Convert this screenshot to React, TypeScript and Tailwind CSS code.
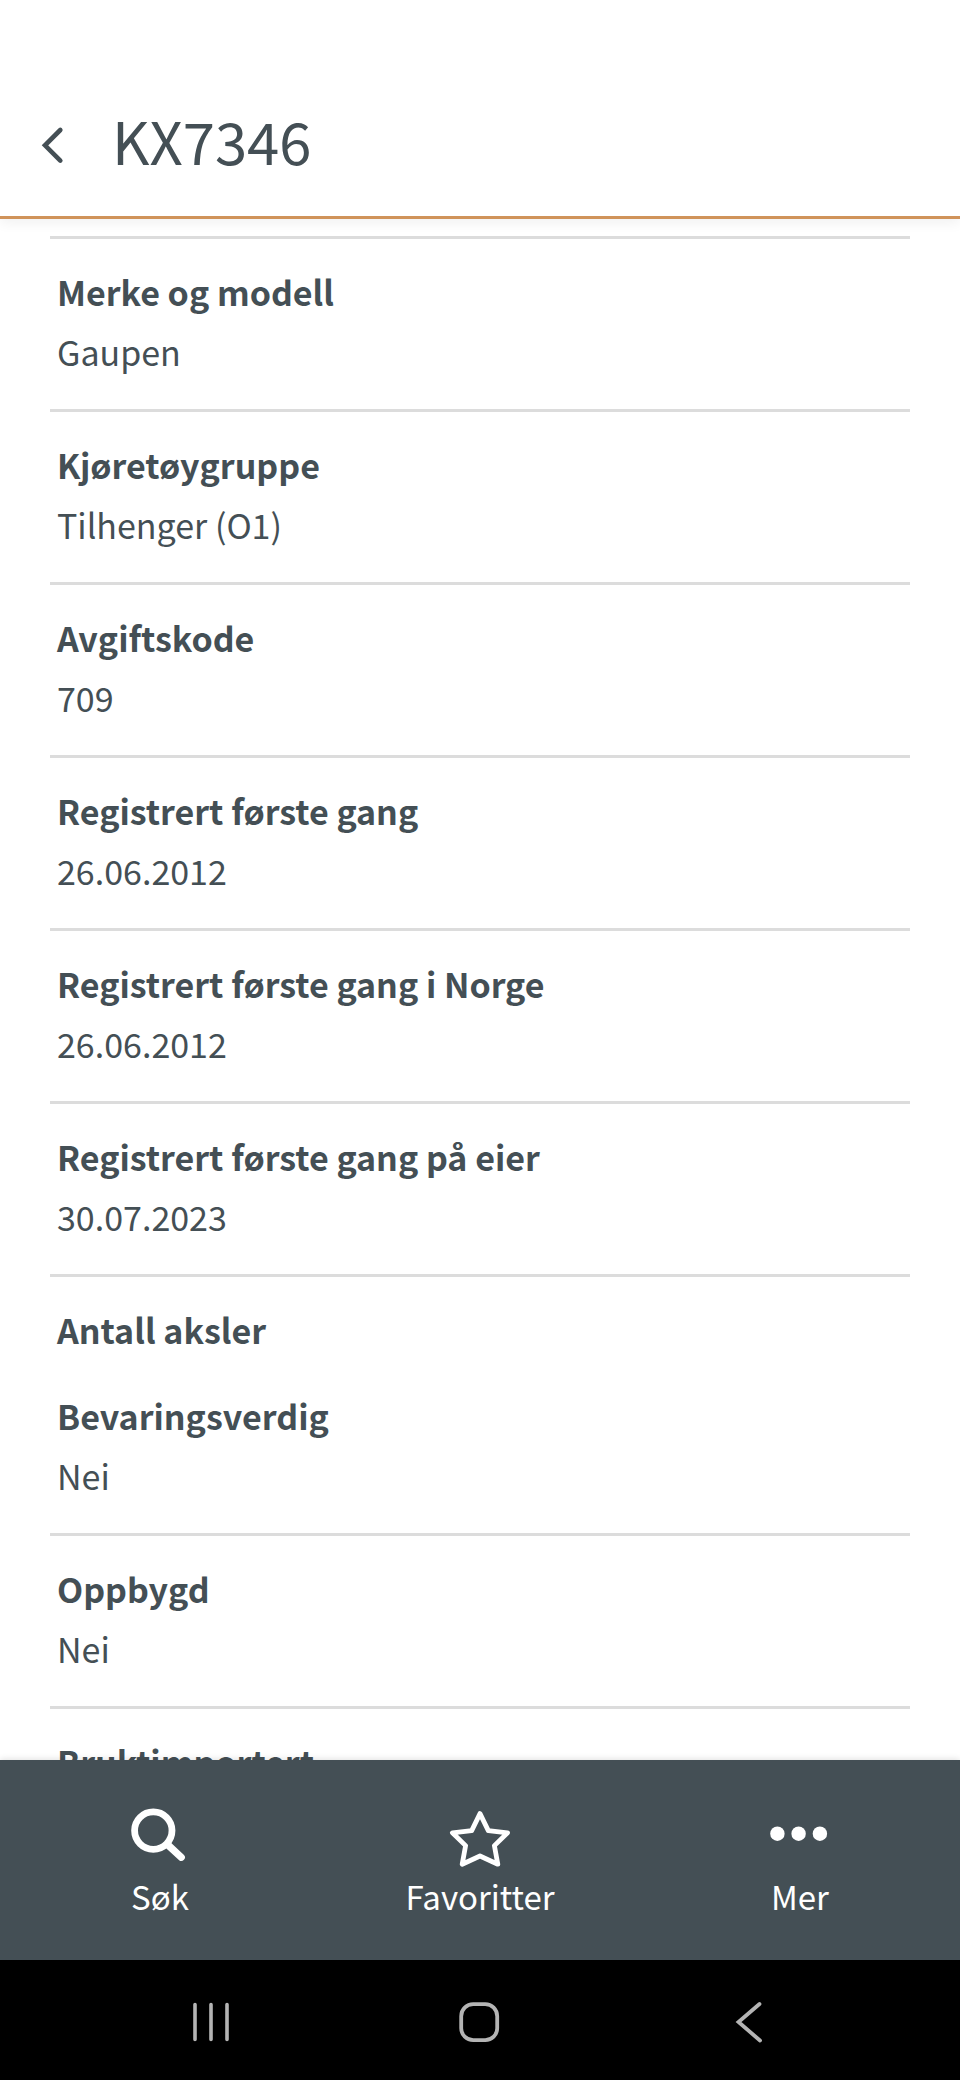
import React from "react";
import clsx from "clsx";

interface Field {
  label: string, value?: string, border?: boolean,
}

const fields: Field[] = [
  { label: "Merke og modell", value: "Gaupen" },
  { label: "Kjøretøygruppe", value: "Tilhenger (O1)" },
  { label: "Avgiftskode", value: "709" },
  { label: "Registrert første gang", value: "26.06.2012" },
  { label: "Registrert første gang i Norge", value: "26.06.2012" },
  { label: "Registrert første gang på eier", value: "30.07.2023" },
  { label: "Antall aksler" },
  { label: "Bevaringsverdig", value: "Nei", border: false },
  { label: "Oppbygd", value: "Nei" },
  { label: "Bruktimportert" },
];

function Header({ title }: { title: string }) {
  return (
    <header className="relative flex items-center gap-12 pt-[104px] pb-10 pl-10 bg-white border-b-3 border-[#d0935a] shadow-[0_4px_12px_rgba(0,0,0,0.06)]">
      <button type="button" aria-label="Tilbake">
        <svg width="24" height="72" viewBox="0 0 24 72" fill="none" stroke="currentColor" strokeWidth="4.6" strokeLinecap="round" strokeLinejoin="miter">
          <path d="M20.3 26 L5 41.3 L20.3 56.6" />
        </svg>
      </button>
      <h1 className="text-[58px] leading-[72px]">{title}</h1>
    </header>
  );
}

function FieldRow({ label, value, border = true }: Field) {
  return (
    <div className={clsx("px-[7px]", border ? "pt-[23px] border-t-3 border-[#dcdcdc]" : "pt-[26px]", value && "pb-[27px]")}>
      <dt className="text-[34px] leading-[60px] font-bold">{label}</dt>
      {value && <dd className="text-[34px] leading-[60px]">{value}</dd>}
    </div>
  );
}

function TabBar() {
  return (
    <nav className="relative grid grid-cols-3 pt-11 pb-10 text-white bg-[#444f55] shadow-[0_-1px_6px_rgba(0,0,0,0.12)]">
      <button type="button" className="flex flex-col items-center gap-1">
        <svg width="64" height="64" viewBox="0 0 64 64" fill="none" stroke="currentColor" strokeLinecap="round">
          <circle cx="25.3" cy="26.6" r="18.7" strokeWidth="6.8" />
          <path d="M40 41 L53.3 53.3" strokeWidth="7.2" />
        </svg>
        <span className="text-[33px] leading-[48px]">Søk</span>
      </button>
      <button type="button" className="flex flex-col items-center gap-1">
        <svg width="64" height="64" viewBox="0 0 64 64" fill="none" stroke="currentColor" strokeWidth="4.8" strokeLinejoin="round">
          <path d="M32 9.6 L40.3 26.6 L59.6 28.8 L46.4 41.6 L49.8 60.2 L32 52 L14.2 60.2 L17.6 41.6 L4.4 28.8 L23.7 26.6 Z" />
        </svg>
        <span className="text-[33px] leading-[48px]">Favoritter</span>
      </button>
      <button type="button" className="flex flex-col items-center gap-1">
        <svg width="64" height="64" viewBox="0 0 64 64" fill="currentColor">
          <circle cx="9.4" cy="29.7" r="7.2" />
          <circle cx="30.6" cy="29.7" r="7.2" />
          <circle cx="51.9" cy="29.7" r="7.2" />
        </svg>
        <span className="text-[33px] leading-[48px]">Mer</span>
      </button>
    </nav>
  );
}

// Android navigation buttons
function SystemBar() {
  return (
    <div className="relative flex justify-between px-[19.7%] pt-10 pb-9 text-[#b4b4b4] bg-black">
      <button type="button" aria-label="Nylige apper">
        <svg width="44" height="44" viewBox="0 0 44 44" fill="none" stroke="currentColor" strokeWidth="3.6" strokeLinecap="round">
          <path d="M6 4.5 V39.5 M22 4.5 V39.5 M38 4.5 V39.5" />
        </svg>
      </button>
      <button type="button" aria-label="Hjem">
        <svg width="44" height="44" viewBox="0 0 44 44" fill="none" stroke="currentColor" strokeWidth="3.8">
          <rect x="3.2" y="4.2" width="36" height="36" rx="12" />
        </svg>
      </button>
      <button type="button" aria-label="Tilbake">
        <svg width="44" height="44" viewBox="0 0 44 44" fill="none" stroke="currentColor" strokeWidth="3.8" strokeLinecap="round">
          <path d="M32.5 4 L11.5 22 L33 40.5" />
        </svg>
      </button>
    </div>
  );
}

export default function App() {
  return (
    <div className="flex flex-col h-screen bg-white text-[#444f55] font-['Noto_Sans_CJK_JP','Noto_Sans',sans-serif]">
      <Header title="KX7346" />
      <main className="flex-1 min-h-0 overflow-hidden px-[50px] pt-[17px]">
        <dl>
          {fields.map((field, index) => (
            <FieldRow key={index} {...field} />
          ))}
        </dl>
      </main>
      <TabBar />
      <SystemBar />
    </div>
  );
}
